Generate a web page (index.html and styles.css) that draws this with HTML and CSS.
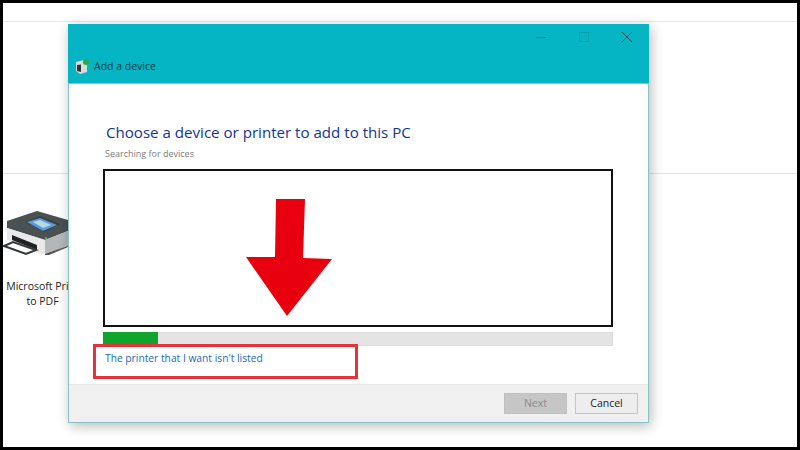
FILE: index.html
```html
<!DOCTYPE html>
<html lang="en">
<head>
<meta charset="utf-8">
<title>Add a device</title>
<link rel="stylesheet" href="styles.css">
</head>
<body>
<div class="screen">
  <div class="top-band"></div>
  <div class="mid-band"></div>
  <div class="device">
    <svg class="device-icon" width="65" height="45" viewBox="0 0 65 45">
      <path d="M4 10 L34 0 L65 9 V20 L42 29 L4 17 Z" fill="#4b5053"/>
      <path d="M22 11 L37 5 L57 13 L41 21 Z" fill="#3a3f42"/>
      <path d="M24 11 L37 7 L54 14 L40 20 Z" fill="#5b9ad6"/>
      <path d="M30 11 L37 9 L48 14 L40 17 Z" fill="#b5d8e6"/>
      <path d="M4 17 L42 29 V43 H37 L4 29 Z" fill="#e9e9e9"/>
      <path d="M42 29 L65 20 V35 L46 43 H42 Z" fill="#b4b7b9"/>
      <path d="M42 43 L65 35 V36 L46 44 H42 Z" fill="#4b5053"/>
      <path d="M9 24 L34 34 V39 L9 29 Z" fill="#1f2325"/>
      <path d="M1 35 L10 31 L33 39 L23 43 Z" fill="#fff" stroke="#33383a" stroke-width="2"/>
      <circle cx="43" cy="27" r="1" fill="#4fd060"/>
    </svg>
    <span class="device-name">Microsoft Print<br>to PDF</span>
  </div>

  <section class="window">
    <header class="titlebar">
      <div class="controls">
        <svg class="ctl" width="12" height="12" viewBox="0 0 12 12"><path d="M1 5.5H11" stroke="#2e6a72" stroke-width="1"/></svg>
        <svg class="ctl" width="12" height="12" viewBox="0 0 12 12"><rect x="1.5" y="0.5" width="9" height="9" fill="none" stroke="#0aa0ae" stroke-width="1"/></svg>
        <svg class="ctl" width="12" height="12" viewBox="0 0 12 12"><path d="M1 0L11 10M11 0L1 10" stroke="#1f5158" stroke-width="1"/></svg>
      </div>
      <div class="title-row">
        <svg width="15" height="16" viewBox="0 0 15 16">
          <path d="M1 4 L9 2 L12 5 V14 L5 16 L1 13 Z" fill="#d8dcdc"/>
          <path d="M2 7 L6 6.5 V14 L2 13 Z" fill="#2f3436"/>
          <circle cx="11" cy="4" r="3" fill="#2fa84a"/>
        </svg>
        <span class="title-text">Add a device</span>
      </div>
    </header>
    <main class="content">
      <h1 class="heading">Choose a device or printer to add to this PC</h1>
      <p class="status">Searching for devices</p>
      <div class="list"></div>
      <div class="progress"><div class="progress-fill"></div></div>
      <a class="link">The printer that I want isn't listed</a>
    </main>
    <footer class="footer">
      <button class="btn btn-disabled">Next</button>
      <button class="btn">Cancel</button>
    </footer>
    <div class="highlight"></div>
    <svg class="arrow" width="90" height="120" viewBox="0 0 90 120">
      <path d="M30 1 H59 L57 60 L86 61 L41 118 L0 59 L29 59 Z" fill="#e8000f"/>
    </svg>
  </section>
</div>
</body>
</html>
```

FILE: styles.css
```css
* { box-sizing: border-box; }
html, body { margin: 0; padding: 0; }
body { width: 800px; height: 450px; background: #000; overflow: hidden; font-family: "Open Sans", "Noto Sans", sans-serif; }
.screen {
  position: relative;
  width: 794px;
  height: 444px;
  margin: 3px 0 0 3px;
  background: #fff;
  overflow: hidden;
}
.top-band { height: 18px; background: #fff; }
.mid-band { height: 153px; border-top: 1px solid #e6e9e9; border-bottom: 1px solid #e3e3e3; }
.device { padding-top: 37px; width: 79px; display: flex; flex-direction: column; align-items: center; color: #222; }
.device-icon { align-self: flex-start; }
.device-name { margin-top: 23px; font-size: 10.5px; line-height: 15px; text-align: center; white-space: nowrap; }

.window {
  position: absolute;
  left: 65px;
  top: 21px;
  width: 581px;
  height: 399px;
  display: flex;
  flex-direction: column;
  background: #fff;
  border: 1px solid #84c4c8;
  border-top: 0;
  box-shadow: 2px 3px 12px rgba(0,0,0,.28);
}
.titlebar {
  height: 60px;
  margin: 0 -1px;
  flex: none;
  background: #05b5c3;
  border-bottom: 1px solid #62d4dc;
  display: flex;
  flex-direction: column;
  padding: 8px 16px 0 6px;
}
.controls { display: flex; justify-content: flex-end; gap: 31px; height: 12px; }
.title-row { display: flex; align-items: center; gap: 4px; margin-top: 14px; margin-left: 1px; }
.title-text { font-size: 10.5px; line-height: 16px; color: #0d3a40; }
.content { flex: 1; padding: 36px 35px 0 34px; display: flex; flex-direction: column; }
.heading { margin: 0 0 0 3px; font-size: 15.1px; line-height: 24px; font-weight: 400; color: #12358f; white-space: nowrap; }
.status { margin: 3px 0 0 2px; font-size: 9px; line-height: 13px; color: #7c7c7c; }
.list { margin-top: 9px; height: 158px; border: 2px solid #111; background: #fff; }
.progress { margin-top: 5px; height: 14px; background: #e4e4e4; border: 1px solid #dcdcdc; }
.progress-fill { margin: -1px 0 0 -1px; width: 55px; height: 14px; background: #0fa52c; }
.link { margin: 5px 0 0 2px; font-size: 10.25px; line-height: 15px; color: #1f69b5; white-space: nowrap; }
.footer {
  height: 38px;
  flex: none;
  background: #f0f0f0;
  border-top: 1px solid #e8e8e8;
  display: flex;
  justify-content: flex-end;
  align-items: center;
  gap: 8px;
  padding-right: 10px;
}
.btn {
  width: 63px;
  height: 21px;
  padding: 0;
  font: 10.5px/1 "Open Sans", sans-serif;
  color: #222;
  background: #ededed;
  border: 1px solid #c4c4c4;
}
.btn-disabled { background: #c6c6c6; color: #8a8a8a; border-color: #c0c0c0; }
.highlight { position: absolute; left: 24px; top: 320px; width: 265px; height: 35px; border: 3px solid #e2343a; }
.arrow { position: absolute; left: 177px; top: 174px; }
```
